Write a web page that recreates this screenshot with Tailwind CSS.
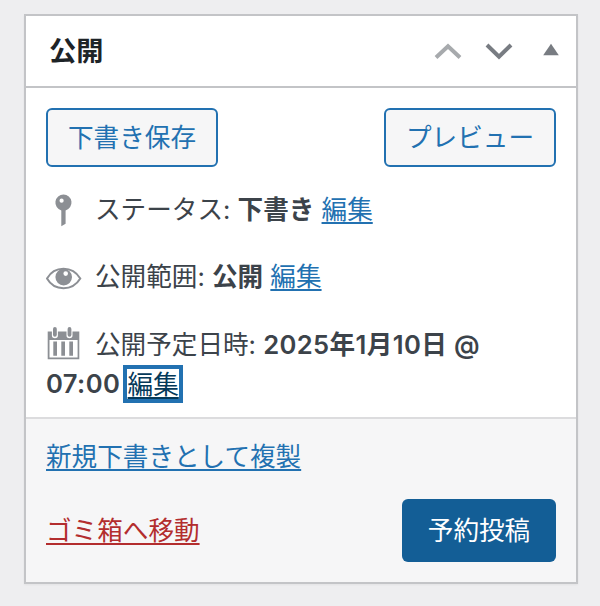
<!DOCTYPE html>
<html lang="ja">
<head>
<meta charset="utf-8">
<title>公開</title>
<script src="https://cdn.jsdelivr.net/npm/@tailwindcss/browser@4"></script>
</head>
<body class="bg-[#eeeef0] h-[606px] overflow-hidden pt-[14px] pl-[24px] font-[Inter,'Noto_Sans_CJK_JP',sans-serif] text-[25.6px] leading-[39px] text-[#3c434a] whitespace-nowrap">
<section class="w-[554px] h-[570px] flex flex-col bg-white border-2 border-[#c3c4c7] shadow-[0_1px_2px_rgba(0,0,0,0.05)]">
  <header class="h-[72px] shrink-0 flex items-center justify-between border-b-2 border-[#c3c4c7] pl-[23px] pr-[17px]">
    <h2 class="text-[27.2px] font-semibold text-[#1d2327]">公開</h2>
    <div class="flex items-center">
      <svg class="w-[28px] h-[18px]" viewBox="0 0 28 18" fill="none" stroke="#a7aaad" stroke-width="4"><path d="M2 15.500 14 4.200 26 15.500"/></svg>
      <svg class="w-[28px] h-[18px] ml-[23px]" viewBox="0 0 28 18" fill="none" stroke="#787c82" stroke-width="4"><path d="M2 3 14 14.800 26 3"/></svg>
      <svg class="w-[16px] h-[18px] ml-[30px]" viewBox="0 0 16 18" fill="#787c82"><path d="M8 1.800 15.800 13.200H.2Z"/></svg>
    </div>
  </header>
  <div class="h-[329px] shrink-0 px-[20px] pt-[20px]">
    <div class="flex justify-between text-[#2271b1]">
      <button class="w-[172px] h-[59px] rounded-[6px] border-2 border-[#2271b1] bg-[#f6f6f7]">下書き保存</button>
      <button class="w-[172px] h-[59px] rounded-[6px] border-2 border-[#2271b1] bg-[#f6f6f7]">プレビュー</button>
    </div>
    <div class="mt-[23px] h-[39px] flex items-center">
      <svg class="w-[36px] h-[36px] mr-[13px] shrink-0" viewBox="0 0 36 36"><path fill="#8c8f94" fill-rule="evenodd" d="M17.500 2.500a8.100 8.100 0 0 1 2.100 15.900V31.800L15.300 34.300V18.400A8.100 8.100 0 0 1 17.500 2.500ZM15.600 6.600a2.100 2.100 0 1 0 0 4.200 2.100 2.100 0 0 0 0-4.200Z"/></svg>
      <span>ステータス: <b class="font-semibold">下書き</b> <a class="text-[#2271b1] underline decoration-2 underline-offset-[3px]">編集</a></span>
    </div>
    <div class="mt-[28px] h-[39px] flex items-center">
      <svg class="w-[36px] h-[36px] mr-[13px] shrink-0" viewBox="0 0 36 36"><path fill="none" stroke="#8c8f94" stroke-width="2" d="M1 19.500C5 12.500 11 9.800 17.500 9.800S30 12.500 34.300 19.500C30 26.500 24 29.200 17.500 29.200S5 26.500 1 19.500Z"/><path fill="#8c8f94" fill-rule="evenodd" d="M17.700 9.800a8.300 8.300 0 1 1 0 16.600 8.300 8.300 0 0 1 0-16.600ZM19.700 12.300a2.300 2.300 0 1 0 0 4.600 2.300 2.300 0 0 0 0-4.600Z"/></svg>
      <span>公開範囲: <b class="font-semibold">公開</b> <a class="text-[#2271b1] underline decoration-2 underline-offset-[3px]">編集</a></span>
    </div>
    <div class="mt-[29px] h-[39px] flex items-center">
      <svg class="w-[36px] h-[36px] mr-[13px] shrink-0" viewBox="0 0 36 36"><path fill="#8c8f94" fill-rule="evenodd" d="M1.700 4.500H5.900V8.500Q5.900 11.300 8.900 11.300T11.900 8.500V4.500H20.500V8.500Q20.500 11.300 23.500 11.300T26.500 8.500V4.500H33.300V32.300H1.700ZM3.500 13V30.500H31.600V13Z"/><g fill="#8c8f94"><rect x="7" y="0" width="3.800" height="9.700" rx="1.900"/><rect x="21.600" y="0" width="3.800" height="9.700" rx="1.900"/><path d="M7.300 14.500h3.700v14.300H7.300zM15.300 14.500H19v14.300h-3.700zM23.300 14.500H27v14.300h-3.700z"/></g></svg>
      <span>公開予定日時: <b class="font-semibold tracking-[0.38px]">2025年1月10日 @</b></span>
    </div>
    <div class="h-[39px] flex items-center">
      <b class="font-semibold tracking-[0.4px]">07:00</b>
      <a class="ml-[3px] w-[60px] h-[38px] leading-[32px] border-4 border-[#2271b1] text-center text-[#043959] underline decoration-2 underline-offset-[3px]">編集</a>
    </div>
  </div>
  <footer class="grow bg-[#f6f6f7] border-t-2 border-[#dcdcde] px-[20px] pt-[18px]">
    <div class="h-[39px]"><a class="text-[#2271b1] underline decoration-2 underline-offset-[3px]">新規下書きとして複製</a></div>
    <div class="mt-[23px] flex items-center justify-between">
      <a class="text-[#b32d2e] underline decoration-2 underline-offset-[3px]">ゴミ箱へ移動</a>
      <button class="w-[154px] h-[63px] rounded-[6px] bg-[#135e96] text-white">予約投稿</button>
    </div>
  </footer>
</section>
</body>
</html>
